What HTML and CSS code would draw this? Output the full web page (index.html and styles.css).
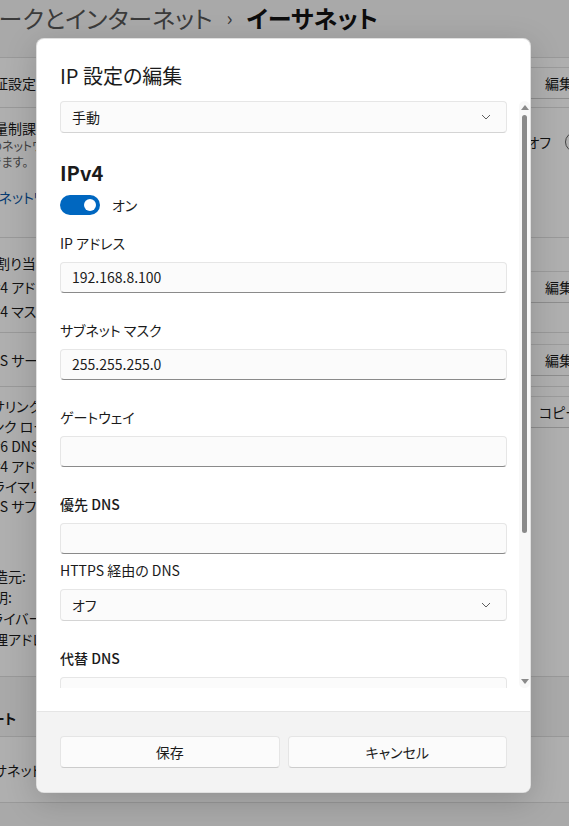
FILE: index.html
```html
<!DOCTYPE html>
<html lang="ja">
<head>
    <meta charset="utf-8">
    <title>イーサネット</title>
    <link rel="stylesheet" href="styles.css">
</head>
<body>
    <div class="page">
        <div class="breadcrumb">
            <span class="crumb">ネットワークとインターネット</span>
            <span class="crumb-sep">›</span>
            <span class="crumb-current">イーサネット</span>
        </div>

        <div class="settings">
            <div class="card card-auth">
                <span class="row-label">認証設定</span>
                <span class="ghost-btn">編集</span>
            </div>

            <div class="card card-metered">
                <div class="row-text">
                    <div class="row-label">従量制課金接続</div>
                    <div class="row-desc">このネットワークに接続しているときは、一部のアプリの動作が変わり、データ使用量を減らすことが<br>できます。</div>
                    <div class="row-link">このネットワークのデータ使用量を制限する</div>
                </div>
                <div class="toggle-wrap">
                    <span>オフ</span>
                    <span class="bg-toggle"></span>
                </div>
            </div>

            <div class="card card-ip">
                <div class="row-text lines">
                    <div>IP 割り当て:</div>
                    <div>IPv4 アドレス:</div>
                    <div>IPv4 マスク:</div>
                </div>
                <span class="ghost-btn">編集</span>
            </div>

            <div class="card card-dns">
                <span class="row-label">DNS サーバーの割り当て:</span>
                <span class="ghost-btn">編集</span>
            </div>

            <div class="card card-props">
                <div class="row-text lines">
                    <div>リサリンク速度 (受信/送信):</div>
                    <div>リンク ローカル IPv6 アドレス:</div>
                    <div>IPv6 DNS サーバー:</div>
                    <div>IPv4 アドレス:</div>
                    <div>プライマリ DNS サフィックス:</div>
                    <div>DNS サフィックス検索一覧:</div>
                    <div class="lines-gap">製造元:</div>
                    <div>説明:</div>
                    <div>ドライバーのバージョン:</div>
                    <div>物理アドレス (MAC):</div>
                </div>
                <span class="ghost-btn">コピー</span>
            </div>

            <div class="section-title">サポート</div>

            <div class="card card-help">
                <span class="row-label">イーサネット アダプターのヘルプ</span>
            </div>
        </div>
    </div>

    <div class="overlay"></div>

    <div class="dialog">
        <div class="dialog-body">
            <div class="dialog-title">IP 設定の編集</div>
            <div class="dialog-scroll">
                <div class="combo">
                    <span>手動</span>
                    <svg class="chevron" width="10" height="6" viewBox="0 0 10 6"><path d="M1 1 L5 5 L9 1" fill="none" stroke="#5f5f5f" stroke-width="1"/></svg>
                </div>

                <div class="section-head">IPv4</div>
                <div class="switch-row">
                    <span class="switch"><span class="switch-knob"></span></span>
                    <span>オン</span>
                </div>

                <div class="field first">
                    <div class="field-label">IP アドレス</div>
                    <div class="textbox">192.168.8.100</div>
                </div>
                <div class="field">
                    <div class="field-label">サブネット マスク</div>
                    <div class="textbox">255.255.255.0</div>
                </div>
                <div class="field">
                    <div class="field-label">ゲートウェイ</div>
                    <div class="textbox"></div>
                </div>
                <div class="field">
                    <div class="field-label strong">優先 DNS</div>
                    <div class="textbox"></div>
                </div>
                <div class="field tight">
                    <div class="field-label">HTTPS 経由の DNS</div>
                    <div class="combo">
                        <span>オフ</span>
                        <svg class="chevron" width="10" height="6" viewBox="0 0 10 6"><path d="M1 1 L5 5 L9 1" fill="none" stroke="#5f5f5f" stroke-width="1"/></svg>
                    </div>
                </div>
                <div class="field">
                    <div class="field-label strong">代替 DNS</div>
                    <div class="textbox"></div>
                </div>
            </div>

            <div class="scrollbar">
                <span class="arrow-up"></span>
                <span class="thumb"></span>
                <span class="arrow-down"></span>
            </div>
        </div>
        <div class="dialog-footer">
            <div class="btn">保存</div>
            <div class="btn">キャンセル</div>
        </div>
    </div>
</body>
</html>
```

FILE: styles.css
```css
* {
    box-sizing: border-box;
}

html, body {
    margin: 0;
}

body {
    font-family: "Noto Sans CJK JP", "Noto Sans", sans-serif;
    font-feature-settings: "palt";
    font-size: 14px;
    color: #1b1b1b;
    background-color: #f3f3f3;
    width: 569px;
    height: 826px;
    overflow: hidden;
    position: relative;
}

/* Settings page behind the dialog */
.page {
    width: 680px;
    margin-left: -36px;
}

.breadcrumb {
    display: flex;
    align-items: center;
    gap: 14px;
    height: 36px;
    margin-left: -47px;
    font-size: 24px;
    line-height: 36px;
    white-space: nowrap;
}

.crumb {
    color: #555555;
}

.crumb-sep {
    font-size: 20px;
    color: #555555;
}

.crumb-current {
    font-weight: 700;
    color: #141414;
}

.settings {
    width: 671px;
    margin-top: 21px;
    border-top: 1px solid #dcdcdc;
}

.card {
    display: flex;
    justify-content: space-between;
    align-items: center;
    padding: 0 16px;
    background-color: #fbfbfb;
    border-bottom: 1px solid #dcdcdc;
    white-space: nowrap;
}

.row-label {
    line-height: 20px;
}

.row-text {
    display: flex;
    flex-direction: column;
}

.row-desc {
    font-size: 12px;
    line-height: 16px;
    color: #5d5d5d;
}

.row-link {
    margin-top: 17px;
    line-height: 20px;
    text-indent: -7px;
    color: #0a57a4;
}

.lines {
    line-height: 20px;
}

.ghost-btn {
    display: flex;
    align-items: center;
    justify-content: center;
    width: 120px;
    height: 32px;
    background-color: #fbfbfb;
    border: 1px solid #dedede;
    border-bottom-color: #cacaca;
    border-radius: 4px;
}

.card-auth {
    height: 50px;
}

.card-metered {
    align-items: flex-start;
    padding-top: 10px;
    padding-bottom: 30px;
}

.card-metered .row-text {
    max-width: 520px;
    overflow: hidden;
}

.toggle-wrap {
    display: flex;
    align-items: center;
    gap: 14px;
    margin-top: 14px;
    margin-right: 14px;
    line-height: 20px;
}

.bg-toggle {
    width: 40px;
    height: 20px;
    border: 1px solid #5f5f5f;
    border-radius: 10px;
}

.card-ip {
    padding-top: 13px;
    padding-bottom: 9px;
}

.card-ip .lines {
    line-height: 24px;
}

.card-dns {
    padding-top: 11px;
    padding-bottom: 10px;
}

.card-props {
    align-items: flex-start;
    padding-top: 9px;
    padding-bottom: 26px;
}

.card-props .lines-gap {
    margin-top: 50px;
}

.card-props .lines-gap,
.card-props .lines-gap ~ div {
    line-height: 21px;
}

.section-title {
    height: 60px;
    padding-top: 31px;
    font-weight: 700;
    line-height: 20px;
    border-bottom: 1px solid #dcdcdc;
}

.card-help {
    height: 66px;
    padding-left: 4px;
}

.overlay {
    position: absolute;
    inset: 0;
    background-color: rgba(0, 0, 0, 0.3);
}

/* Dialog */
.dialog {
    position: absolute;
    left: 36px;
    top: 38px;
    width: 495px;
    height: 755px;
    display: flex;
    flex-direction: column;
    background-color: #ffffff;
    border: 1px solid rgba(0, 0, 0, 0.12);
    border-radius: 8px;
    box-shadow: 0 8px 32px rgba(0, 0, 0, 0.18);
    overflow: hidden;
}

.dialog-body {
    position: relative;
    flex: 1;
    display: flex;
    flex-direction: column;
    padding: 23px;
    min-height: 0;
}

.dialog-title {
    font-size: 20px;
    line-height: 28px;
    margin-bottom: 11px;
}

.dialog-scroll {
    flex: 1;
    overflow: hidden;
    min-height: 0;
}

.combo {
    display: flex;
    align-items: center;
    justify-content: space-between;
    height: 32px;
    padding: 0 15px 0 11px;
    background-color: #fbfbfb;
    border: 1px solid #e6e6e6;
    border-bottom-color: #d4d4d4;
    border-radius: 4px;
}

.chevron {
    display: block;
}

.section-head {
    margin-top: 26px;
    font-size: 20px;
    font-weight: 700;
    line-height: 28px;
}

.switch-row {
    display: flex;
    align-items: center;
    gap: 12px;
    margin-top: 8px;
    line-height: 20px;
}

.switch {
    position: relative;
    width: 40px;
    height: 20px;
    background-color: #0067c0;
    border-radius: 10px;
}

.switch-knob {
    position: absolute;
    top: 4px;
    right: 4px;
    width: 12px;
    height: 12px;
    background-color: #ffffff;
    border-radius: 50%;
}

.field {
    margin-top: 27px;
}

.field.first {
    margin-top: 18px;
}

.field.tight {
    margin-top: 6px;
}

.field-label {
    line-height: 20px;
    margin-bottom: 9px;
}

.field-label.strong {
    font-weight: 500;
}

.textbox {
    height: 31px;
    padding: 0 11px;
    line-height: 28px;
    background-color: #fbfbfb;
    border: 1px solid #e6e6e6;
    border-bottom-color: #8a8a8a;
    border-radius: 4px;
}

.scrollbar {
    position: absolute;
    top: 62px;
    right: 0;
    width: 11px;
    height: 587px;
    display: flex;
    flex-direction: column;
    align-items: center;
    background-color: #f8f8f8;
    border-radius: 6px;
    padding: 4px 0;
}

.arrow-up,
.arrow-down {
    width: 0;
    height: 0;
    border-left: 4px solid transparent;
    border-right: 4px solid transparent;
}

.arrow-up {
    border-bottom: 5px solid #8a8a8a;
}

.arrow-down {
    margin-top: auto;
    border-top: 5px solid #8a8a8a;
}

.thumb {
    width: 5px;
    height: 418px;
    margin-top: 5px;
    background-color: #8a8a8a;
    border-radius: 3px;
}

.dialog-footer {
    display: grid;
    grid-template-columns: 1fr 1fr;
    gap: 8px;
    padding: 24px 23px;
    background-color: #f3f3f3;
    border-top: 1px solid #e5e5e5;
}

.btn {
    height: 32px;
    line-height: 30px;
    text-align: center;
    background-color: #fbfbfb;
    border: 1px solid #e5e5e5;
    border-bottom-color: #cccccc;
    border-radius: 4px;
}
```
